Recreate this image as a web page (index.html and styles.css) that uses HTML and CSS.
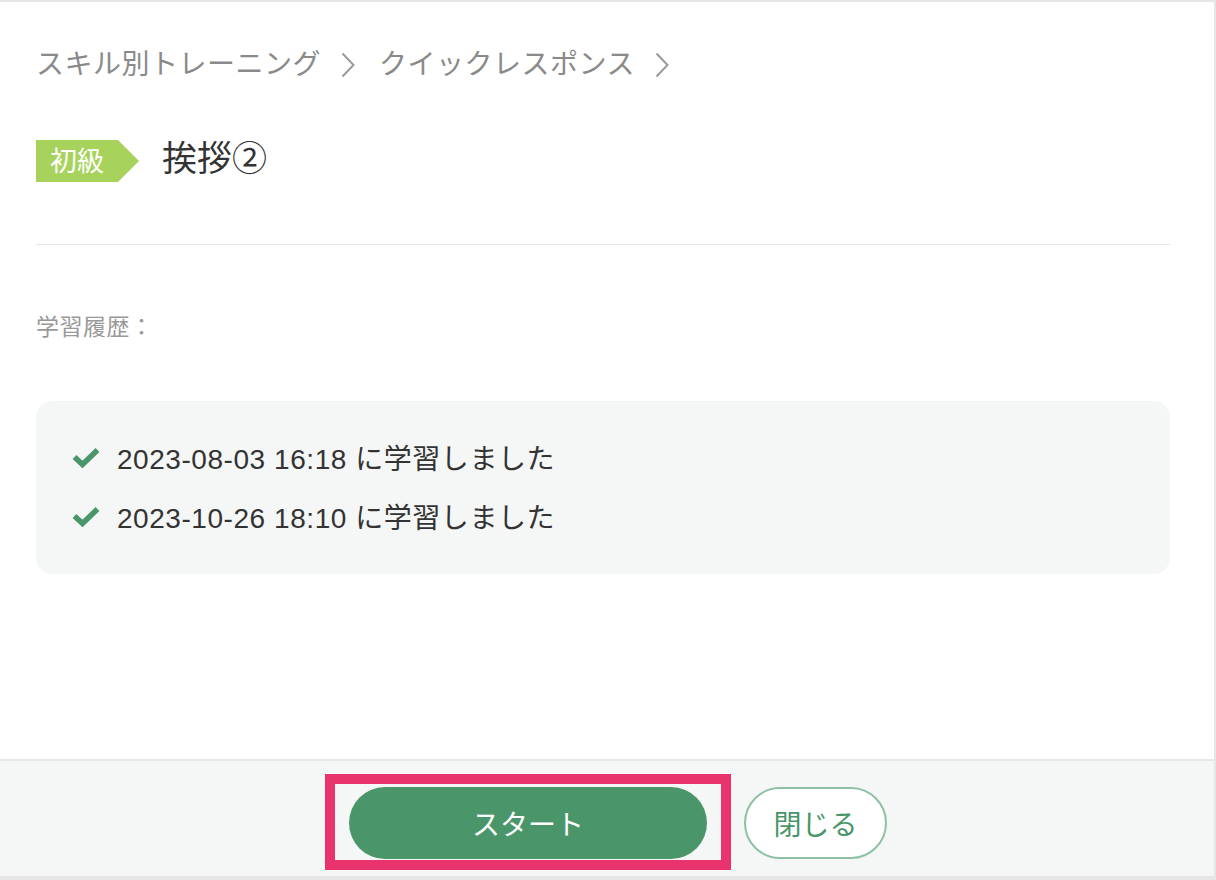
FILE: index.html
```html
<!DOCTYPE html>
<html lang="ja">

<head>
    <meta charset="UTF-8">
    <meta name="viewport" content="width=device-width, initial-scale=1.0">
    <title>挨拶②</title>
    <link rel="stylesheet" href="styles.css">
</head>

<body>
    <div class="modal">
        <div class="modal-body">
            <!-- パンくず -->
            <nav class="breadcrumb">
                <span>スキル別トレーニング</span>
                <svg class="chevron" width="14" height="26" viewBox="0 0 14 26"><polyline points="1.5,1.5 12.5,13 1.5,24.5" /></svg>
                <span>クイックレスポンス</span>
                <svg class="chevron" width="14" height="26" viewBox="0 0 14 26"><polyline points="1.5,1.5 12.5,13 1.5,24.5" /></svg>
            </nav>

            <div class="lesson-head">
                <span class="level">初級</span>
                <h2 class="lesson-title">挨拶②</h2>
            </div>

            <hr class="divider">

            <p class="history-label">学習履歴：</p>

            <ul class="history">
                <li>
                    <svg class="check" width="28" height="21" viewBox="0 0 28 21"><polyline points="2.5,10 10.5,17.5 25.5,3" /></svg>
                    <span>2023-08-03 16:18 に学習しました</span>
                </li>
                <li>
                    <svg class="check" width="28" height="21" viewBox="0 0 28 21"><polyline points="2.5,10 10.5,17.5 25.5,3" /></svg>
                    <span>2023-10-26 18:10 に学習しました</span>
                </li>
            </ul>
        </div>

        <div class="modal-footer">
            <div class="start-wrap">
                <button class="btn-start">スタート</button>
                <span class="highlight"></span>
            </div>
            <button class="btn-close">閉じる</button>
        </div>
    </div>
</body>

</html>
```

FILE: styles.css
```css
/* 全体 */
body {
    margin: 0;
    font-family: 'Liberation Sans', 'Noto Sans CJK JP', sans-serif;
    background-color: #ffffff;
}

.modal {
    height: 880px;
    box-sizing: border-box;
    border-top: 2px solid #e6e6e6;
    border-right: 2px solid #e6e6e6;
    display: flex;
    flex-direction: column;
}

.modal-body {
    flex: 1;
    padding: 42px 44px 0 36px;
}

/* パンくず */
.breadcrumb {
    display: flex;
    align-items: center;
    font-size: 28px;
    line-height: 42px;
    letter-spacing: 0.5px;
    color: #8a8a8a;
}

.chevron {
    margin: 0 24px 0 20px;
}

.chevron polyline {
    fill: none;
    stroke: #9a9a9a;
    stroke-width: 2;
}

/* タイトル */
.lesson-head {
    display: flex;
    align-items: center;
    margin-top: 54px;
    height: 42px;
}

.level {
    position: relative;
    display: inline-block;
    width: 82px;
    height: 42px;
    line-height: 44px;
    text-align: center;
    background-color: #a7d25b;
    color: #ffffff;
    font-size: 27px;
}

.level::after {
    content: "";
    position: absolute;
    top: 0;
    left: 100%;
    border-top: 21px solid transparent;
    border-bottom: 21px solid transparent;
    border-left: 21px solid #a7d25b;
}

.lesson-title {
    margin: 0 0 4px 44px;
    font-size: 35px;
    line-height: 42px;
    font-weight: normal;
    color: #333333;
}

.divider {
    margin: 62px 0 0;
    border: none;
    border-top: 1px solid #e4e4e4;
}

.history-label {
    margin: 65px 0 0;
    font-size: 23px;
    line-height: 34px;
    letter-spacing: 0.5px;
    color: #999999;
}

/* 学習履歴 */
.history {
    list-style: none;
    margin: 57px 0 0;
    padding: 36px 36px 38px;
    background-color: #f5f7f6;
    border-radius: 16px;
    display: flex;
    flex-direction: column;
    gap: 19px;
}

.history li {
    display: flex;
    align-items: center;
    height: 40px;
    font-size: 28px;
    letter-spacing: 0.55px;
    color: #333333;
}

.check {
    margin-right: 17px;
}

.check polyline {
    fill: none;
    stroke: #4a966a;
    stroke-width: 5.5;
}

/* フッター */
.modal-footer {
    border-top: 2px solid #e8e8e8;
    border-bottom: 4px solid #e6e6e6;
    background-color: #f5f7f6;
    padding: 26px 0 17px 22px;
    display: flex;
    justify-content: center;
    gap: 37px;
}

.start-wrap {
    position: relative;
}

button {
    font-family: inherit;
    font-size: 28px;
    height: 72px;
    border-radius: 36px;
    cursor: pointer;
}

.btn-start {
    width: 358px;
    border: none;
    background-color: #4a966a;
    color: #ffffff;
}

.btn-close {
    width: 143px;
    border: 2px solid #8cc2a2;
    background-color: #ffffff;
    color: #4a966a;
}

/* 注目枠 */
.highlight {
    position: absolute;
    top: -13px;
    left: -24px;
    right: -24px;
    bottom: -11px;
    border: 10px solid #e8336d;
    pointer-events: none;
}
```
